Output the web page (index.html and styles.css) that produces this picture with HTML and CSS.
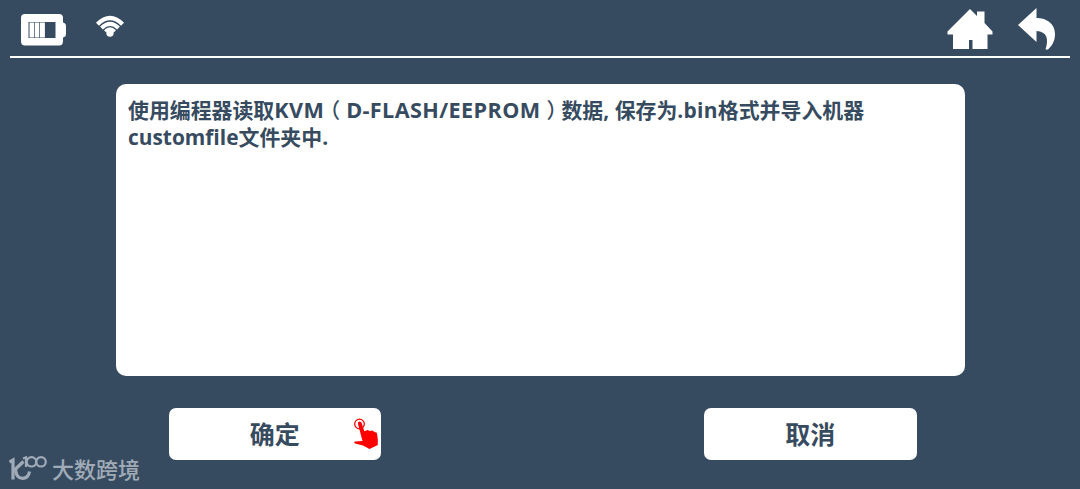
FILE: index.html
```html
<!DOCTYPE html>
<html lang="zh-CN">
<head>
  <meta charset="UTF-8">
  <meta name="viewport" content="width=device-width, initial-scale=1.0">
  <title>KVM</title>
  <link rel="stylesheet" href="styles.css">
</head>
<body>

  <header class="status-bar">
    <div class="status-icons">
      <svg class="battery" width="46" height="32" viewBox="0 0 46 32">
        <path fill="#fff" fill-rule="evenodd" d="M4 0H38Q42 0 42 4V8.500Q45 9 45 12V20Q45 23 42 23.500V27Q42 31.500 38 31.500H4Q0 31.500 0 27V4Q0 0 4 0ZM7.500 8V24H34.500V8Z"/>
        <path fill="#fff" d="M8.500 8.500h4.500v15H8.500zM13.700 8.500h4.500v15h-4.500zM18.900 8.500h5v15h-5z"/>
      </svg>
      <svg class="wifi" width="30" height="22" viewBox="0 0 30 22">
        <g fill="none" stroke="#fff" stroke-width="4.300">
          <path d="M2.500 9.200Q15 -3.200 27.500 9.200"/>
          <path d="M6.500 13Q15 4.800 23.500 13" stroke-width="4"/>
          <path d="M10 16.200Q15 11.400 20 16.200" stroke-width="2.800"/>
        </g>
        <circle cx="15" cy="18" r="3.700" fill="#fff"/>
      </svg>
    </div>
    <nav class="nav-icons">
      <svg class="home" width="46" height="41" viewBox="0 0 46 41">
        <path fill="#fff" d="M23 0L30 7V2.500H37.500V14L45.500 22.500V25.500H40.500V40H25.500V31H22V40H6V25.500H.5V22.500Z"/>
      </svg>
      <svg class="back" width="38" height="44" viewBox="0 0 38 44">
        <path fill="#fff" d="M18.500 0V10C29 10 37 16 37 26C37 33 34 38 30 41.500H27.500C31 31 29 23.500 18.500 23V34L0 17Z"/>
      </svg>
    </nav>
  </header>

  <main class="dialog">
    <p class="message">使用编程器读取<span class="latin caps">KVM</span><span class="paren open">（</span><span class="latin caps">D-FLASH/EEPROM</span><span class="paren close">）</span>数据<span class="latin">, </span>保存为<span class="latin ext">.bin</span>格式并导入机器<br><span class="latin">customfile</span>文件夹中<span class="latin">.</span></p>
  </main>

  <div class="actions">
    <button class="btn" type="button">
      确定
      <svg class="tap" width="26" height="32" viewBox="0 0 26 32">
        <circle cx="6.500" cy="6" r="4.800" fill="none" stroke="#f00" stroke-width="1.300"/>
        <path fill="#f00" d="M5 6Q4.500 3.800 6.500 3.600Q8.300 3.400 8.800 5.500L11.300 13.200L14.500 12L17 13L19.500 12.500L21.500 14L23.800 14.800L24.800 21V27L16.500 31L10 27.500L2 25.500Q.3 24.500 1.800 23.500L9.500 23Z"/>
      </svg>
    </button>
    <button class="btn" type="button">取消</button>
  </div>

  <div class="watermark">
    <svg width="38" height="26" viewBox="0 0 38 26">
      <g fill="none" stroke="#a0abb7" stroke-width="3.200">
        <path d="M.5 7L4 5V24.500"/>
        <path d="M14.500 6.500L6.500 14Q7 23.300 13.500 23.300Q19.500 23.300 20.500 16.500"/>
        <path d="M14 3.500L17 2.300V12" stroke-width="2.200"/>
        <ellipse cx="22.500" cy="6.800" rx="4.800" ry="4.700" stroke-width="2.200"/>
        <ellipse cx="32" cy="6.800" rx="4.800" ry="4.700" stroke-width="2.200"/>
      </g>
    </svg>
    <span>大数跨境</span>
  </div>

</body>
</html>
```

FILE: styles.css
```css
* {margin: 0; padding: 0; box-sizing: border-box;}

body {
  height: 489px;
  overflow: hidden;
  position: relative;
  background: #374b60;
  color: #374b60;
  font-family: "Noto Sans CJK SC", sans-serif;
}

.status-bar {
  display: flex;
  justify-content: space-between;
  height: 58px;
  margin: 0 10px;
  padding: 8px 14px 0 11px;
  border-bottom: 2px solid #fff;
}

.status-icons, .nav-icons {
  display: flex;
  align-items: flex-start;
}
.battery {
  margin-top: 6px;
}
.wifi {
  margin: 7px 0 0 28px;
}
.nav-icons {
  gap: 25px;
}
.home {
  margin-top: 1px;
}

.dialog {
  width: 849px;
  height: 291.5px;
  margin: 26px 0 0 115.5px;
  padding: 12px 12.5px;
  background: #fff;
  border-radius: 10px;
}

.message {
  font-size: 20.9px;
  font-weight: bold;
  line-height: 26px;
  white-space: nowrap;
}
.latin {
  font-family: "Open Sans", "Noto Sans", sans-serif;
}
.caps {
  font-size: 21.6px;
  letter-spacing: 0.4px;
  line-height: 1;
}
/* half-width brackets, padded so they sit centred */
.paren {
  font-weight: 500;
  font-feature-settings: "halt";
}
.open {
  margin: 0 6px 0 5.5px;
}
.close {
  margin: 0 4.5px 0 6px;
}
.ext {
  letter-spacing: 0.3px;
}

.actions {
  display: flex;
  justify-content: space-between;
  width: 748px;
  margin: 32px 0 0 168.5px;
}
.btn {
  position: relative;
  width: 212.5px;
  height: 52px;
  padding-bottom: 2px;
  border: none;
  border-radius: 7px;
  background: #fff;
  color: #374b60;
  font-family: inherit;
  font-size: 25px;
  font-weight: bold;
  cursor: pointer;
}
.tap {
  position: absolute;
  right: 2.5px;
  top: 10px;
}

.watermark {
  position: absolute;
  left: 9px;
  top: 455px;
  display: flex;
  gap: 5px;
  color: #a0abb7;
  font-size: 22px;
  font-weight: 500;
  line-height: 26px;
}
```
